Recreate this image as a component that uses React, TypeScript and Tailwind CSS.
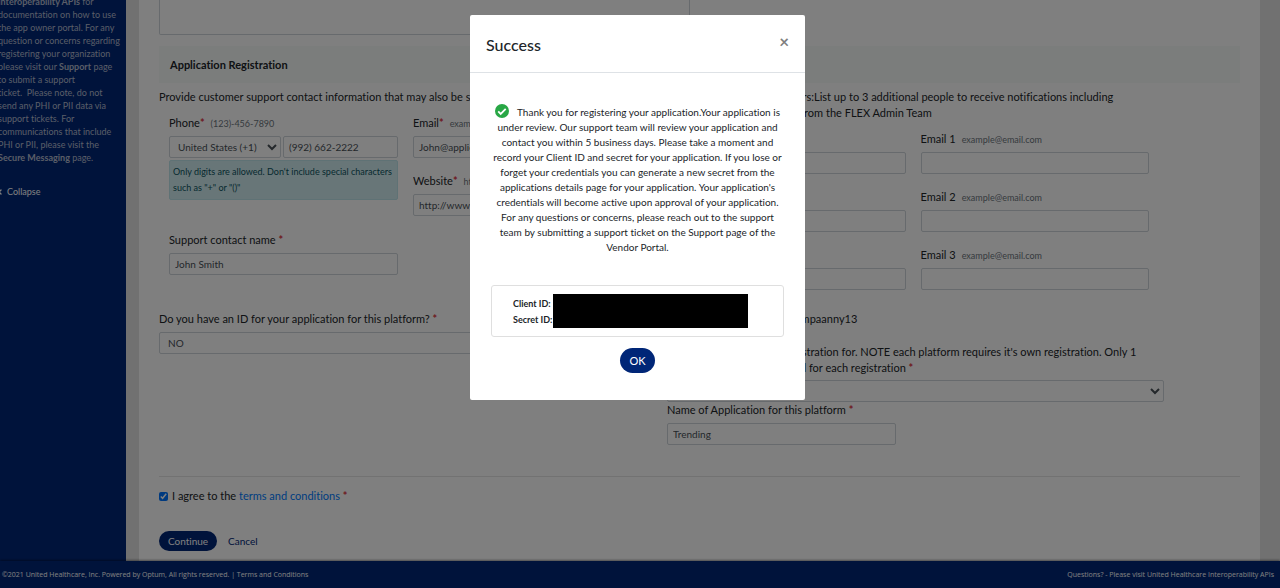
import type { ReactNode } from 'react';
import { ChevronLeft } from 'lucide-react';

const INPUT = 'block h-[22px] w-full rounded-xs border border-[#ced4da] bg-white px-[5px] text-[10px] text-[#495057]';
const SELECT = 'block h-[22px] rounded-xs border border-[#ced4da] bg-white px-1 text-[10px] text-[#495057]';

function Star() {
  return <span className="font-bold text-[#dc3545]">*</span>;
}

function Label({ htmlFor, hint, children }: { htmlFor: string; hint?: string; children: ReactNode }) {
  return (
    <label htmlFor={htmlFor} className="mb-[5px] block truncate">
      {children}
      {hint && <span className="ml-1.5 text-[9px] leading-none text-[#6c757d]">{hint}</span>}
    </label>
  );
}

function Field({ id, label, hint, value, required }: {
  id: string;
  label: string;
  hint?: string;
  value?: string;
  required?: boolean;
}) {
  return (
    <div>
      <Label htmlFor={id} hint={hint}>
        {label}
        {required && <Star />}
      </Label>
      <input id={id} type="text" defaultValue={value} className={INPUT} />
    </div>
  );
}

function Sidebar() {
  return (
    <aside className="w-[126px] shrink-0 overflow-hidden bg-[#002677] text-[#b4bccf]">
      <p className="-ml-0.5 -mt-[5px] whitespace-nowrap text-[9px] leading-[13px]">
        <b>Interoperability APIs</b> for<br />
        documentation on how to use<br />
        the app owner portal. For any<br />
        question or concerns regarding<br />
        registering your organization<br />
        please visit our <b>Support</b> page<br />
        to submit a support<br />
        ticket.&nbsp; Please note, do not<br />
        send any PHI or PII data via<br />
        support tickets. For<br />
        communications that include<br />
        PHI or PII, please visit the<br />
        <b>Secure Messaging</b> page.
      </p>
      <button type="button" className="-ml-1 mt-5 flex items-center gap-[3px] text-[9px] leading-4 text-white">
        <ChevronLeft size={8} strokeWidth={4} aria-hidden="true" />
        Collapse
      </button>
    </aside>
  );
}

function ContactFields() {
  return (
    <div className="mt-2.5 grid grid-cols-2 items-start gap-[15px] pl-2.5 pr-[25px]">
      <div className="grid grid-cols-1 gap-8">
        <div>
          <Label htmlFor="phone" hint="(123)-456-7890">Phone<Star /></Label>
          <div className="flex gap-0.5">
            <select aria-label="Country code" className={`${SELECT} w-28 shrink-0`}>
              <option>United States (+1)</option>
            </select>
            <input id="phone" type="tel" defaultValue="(992) 662-2222" className={`${INPUT} min-w-0`} />
          </div>
          <p className="mt-0.5 whitespace-nowrap rounded-xs border border-[#bee5eb] bg-[#d1ecf1] px-[3px] py-[3px] text-[9px] text-[#0c5460]">
            Only digits are allowed. Don't include special characters<br />
            such as "+" or "()"
          </p>
        </div>
        <Field id="contact" label="Support contact name " value="John Smith" required />
      </div>
      <div className="grid grid-cols-1 gap-[15px]">
        <Field id="email" label="Email" hint="example@email.com" value="John@application.com" required />
        <Field id="website" label="Website" hint="http://www.example.com" value="http://www.application.com" required />
      </div>
    </div>
  );
}

function Registration() {
  return (
    <main className="min-w-0 flex-1 bg-white px-5 pb-2.5">
      <textarea aria-label="Description" className="block h-[35px] w-[531px] resize-none rounded-b-xs border border-t-0 border-[#ced4da]" />
      <h2 className="mt-[11px] bg-[#f6fbf9] px-[11px] py-[11px] text-[11px] font-bold leading-[15px]">Application Registration</h2>

      <div className="mt-1.5 grid grid-cols-[508fr_573fr]">
        <section>
          <p className="whitespace-nowrap">Provide customer support contact information that may also be shared</p>
          <ContactFields />
        </section>
        <section>
          <p className="whitespace-nowrap">
            Application Stakeholder Users:List up to 3 additional people to receive notifications including<br />
            alerts and all other updates from the FLEX Admin Team
          </p>
          <div className="mt-2.5 grid grid-cols-2 gap-[15px] pl-2.5 pr-[91px]">
            <Field id="name1" label="Name 1" />
            <Field id="email1" label="Email 1" hint="example@email.com" />
            <Field id="name2" label="Name 2" />
            <Field id="email2" label="Email 2" hint="example@email.com" />
            <Field id="name3" label="Name 3" />
            <Field id="email3" label="Email 3" hint="example@email.com" />
          </div>
        </section>
      </div>

      <div className="mt-[21px] grid grid-cols-[508fr_573fr]">
        <section className="pr-[11px]">
          <Label htmlFor="has-id">Do you have an ID for your application for this platform? <Star /></Label>
          <select id="has-id" className={`${SELECT} w-full`}>
            <option>NO</option>
          </select>
        </section>
        <section className="pr-[76px]">
          <p>Company Name: My TestCompaanny13</p>
          <label htmlFor="platform" className="mb-1 mt-[17px] block whitespace-nowrap">
            Select your platform for registration for. NOTE each platform requires it's own registration. Only 1<br />
            app platform can be selected for each registration <Star />
          </label>
          <select id="platform" className={`${SELECT} w-full`}>
            <option></option>
          </select>
          <Label htmlFor="app-name">Name of Application for this platform <Star /></Label>
          <input id="app-name" type="text" defaultValue="Trending" className={`${INPUT} max-w-[229px]`} />
        </section>
      </div>

      <hr className="mt-[31px] border-[#e5e5e5]" />
      <div className="mt-[11px] flex items-center gap-1">
        <input id="agree" type="checkbox" defaultChecked className="size-[9px] accent-[#0075ff]" />
        <label htmlFor="agree">
          I agree to the <a href="#terms" className="text-[#007bff]">terms and conditions</a> <Star />
        </label>
      </div>
      <div className="mt-[27px] flex items-center gap-[11px] text-[10px] text-[#002677]">
        <button type="button" className="h-5 w-[58px] rounded-full bg-[#002677] text-white">Continue</button>
        <button type="button">Cancel</button>
      </div>
    </main>
  );
}

function SuccessModal() {
  return (
    <div className="fixed inset-0 flex items-start justify-center bg-black/50 pr-[5px] pt-[15px]">
      <div role="dialog" aria-modal="true" aria-labelledby="modal-title" className="w-[335px] rounded-xs bg-white pb-[27px]">
        <header className="flex items-start justify-between border-b border-[#dee2e6] px-4 pb-4 pt-[18px]">
          <h1 id="modal-title" className="text-base font-medium leading-[23px]">Success</h1>
          <button type="button" aria-label="Close" className="text-[17px] font-bold leading-[18px] text-[#7f7f7f]">×</button>
        </header>
        <p className="mt-8 whitespace-nowrap text-center text-[10px] leading-[15px]">
          <svg viewBox="0 0 14 14" className="-mb-0.5 -mt-1.5 mr-2 inline size-3.5" aria-hidden="true">
            <circle cx="7" cy="7" r="7" fill="#28a745" />
            <path d="M3.2 7.4l2.5 2.5 5-5" fill="none" stroke="#fff" strokeWidth="1.8" />
          </svg>
          Thank you for registering your application.Your application is<br />
          under review. Our support team will review your application and<br />
          contact you within 5 business days. Please take a moment and<br />
          record your Client ID and secret for your application. If you lose or<br />
          forget your credentials you can generate a new secret from the<br />
          applications details page for your application. Your application's<br />
          credentials will become active upon approval of your application.<br />
          For any questions or concerns, please reach out to the support<br />
          team by submitting a support ticket on the Support page of the<br />
          Vendor Portal.
        </p>
        <div className="mx-[21px] mt-[30px] flex rounded-[3px] border border-[#dfdfdf] py-2 pl-[21px] text-[9px] font-bold">
          <dl className="w-10 whitespace-nowrap pt-0.5">
            <dt>Client ID:</dt>
            <dt>Secret ID:</dt>
          </dl>
          <div className="h-[34px] w-[195px] bg-black" />
        </div>
        <button type="button" className="mx-auto mt-[11px] block h-[25px] w-[35px] rounded-full bg-[#002677] text-[11px] text-white">OK</button>
      </div>
    </div>
  );
}

export default function App() {
  return (
    <div className="flex min-h-screen flex-col bg-[#e2e2e2] font-['Lato','Noto_Sans',sans-serif] text-[11px] leading-4 text-[#212529] [font-variant-ligatures:none]">
      <div className="flex flex-1 gap-[13px] pr-5">
        <Sidebar />
        <Registration />
      </div>
      <footer className="flex justify-between bg-[#002677] px-0.5 pb-[5px] pt-1.5 pr-1.5 font-['Open_Sans',sans-serif] text-[7px] text-white shadow-[0_-1px_2px_#00000066]">
        <span>©2021 United Healthcare, Inc. Powered by Optum, All rights reserved. | <a href="#footer-terms">Terms and Conditions</a></span>
        <span>Questions? - Please visit United Healthcare Interoperability APIs</span>
      </footer>
      <SuccessModal />
    </div>
  );
}
